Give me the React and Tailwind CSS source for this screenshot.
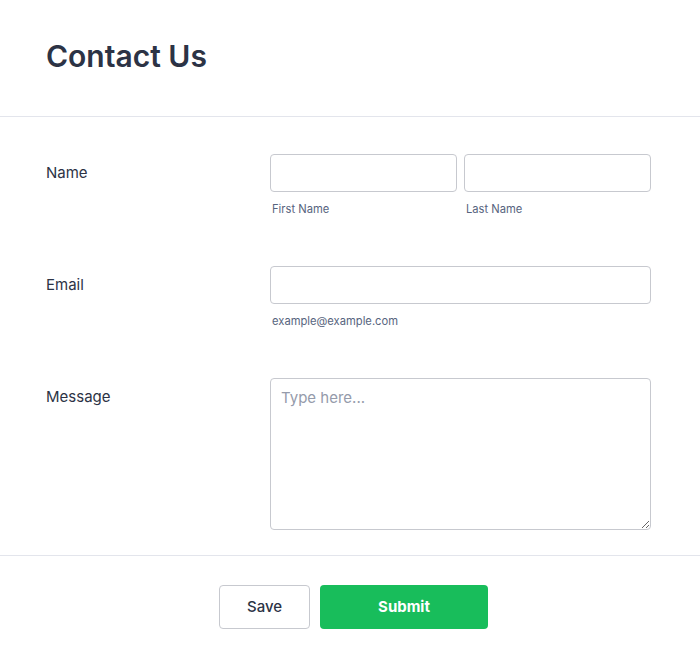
import React from 'react';

const inputCls =
  'w-full h-[38px] rounded-[4px] border border-[#c7c9cf] bg-white px-[10px] text-[15px] text-[#2c3345] outline-none';

const Row = ({ label, children, tall }) => (
  <div className={`flex ${tall ? '' : 'h-[112px]'}`}>
    <div className="w-[224px] shrink-0 text-[15px] leading-[38px] text-[#2c3345]">{label}</div>
    <div className="flex-1">{children}</div>
  </div>
);

const SubLabel = ({ children }) => (
  <div className="mt-[9px] pl-[2px] text-[11.2px] leading-[16px] text-[#57647e]">{children}</div>
);

export default function App() {
  return (
    <div className="min-h-screen bg-white font-['Inter',sans-serif]">
      <div className="flex h-[117px] items-center border-b border-[#e3e5ec] px-[46px] pb-[3px]">
        <h1 className="text-[30px] font-semibold text-[#2c3345]">Contact Us</h1>
      </div>

      <div className="pt-[37px] pb-[25px] pl-[46px] pr-[49px]">
        <Row label="Name">
          <div className="flex gap-[7px]">
            <div className="flex-1">
              <input className={inputCls} />
              <SubLabel>First Name</SubLabel>
            </div>
            <div className="flex-1">
              <input className={inputCls} />
              <SubLabel>Last Name</SubLabel>
            </div>
          </div>
        </Row>
        <Row label="Email">
          <input className={inputCls} />
          <SubLabel>example@example.com</SubLabel>
        </Row>
        <Row label="Message" tall>
          <textarea
            placeholder="Type here..."
            className="block h-[152px] w-full rounded-[4px] border border-[#c7c9cf] bg-white px-[10px] py-[8px] text-[15px] text-[#2c3345] outline-none placeholder:text-[#959bab]"
          />
        </Row>
      </div>

      <div className="flex justify-center gap-[10px] border-t border-[#e3e5ec] pt-[29px] pl-[7px]">
        <button className="h-[44px] w-[91px] rounded-[4px] border border-[#c7c9cf] bg-white text-[15px] font-medium text-[#2c3345]">
          Save
        </button>
        <button className="h-[44px] w-[168px] rounded-[4px] bg-[#18bd5b] text-[15px] font-bold text-white">
          Submit
        </button>
      </div>
    </div>
  );
}
